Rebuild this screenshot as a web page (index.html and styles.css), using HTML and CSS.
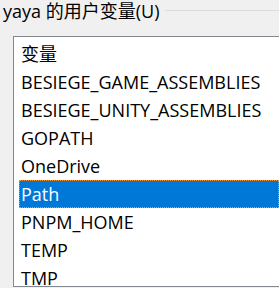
FILE: index.html
```html
<!DOCTYPE html>
<html lang="zh-CN">
<head>
  <meta charset="UTF-8" />
  <title>用户变量</title>
  <link rel="stylesheet" href="styles.css">
</head>
<body>
  <div class="group">
    <div class="group-head">
      <span class="group-title">yaya 的用户变量(U)</span>
      <span class="group-line"></span>
    </div>
    <ul class="listbox">
      <li class="item">变量</li>
      <li class="item">BESIEGE_GAME_ASSEMBLIES</li>
      <li class="item">BESIEGE_UNITY_ASSEMBLIES</li>
      <li class="item">GOPATH</li>
      <li class="item">OneDrive</li>
      <li class="item selected">Path</li>
      <li class="item">PNPM_HOME</li>
      <li class="item">TEMP</li>
      <li class="item">TMP</li>
    </ul>
  </div>
</body>
</html>
```

FILE: styles.css
```css
* {
  box-sizing: border-box;
}
html, body {
  margin: 0;
  padding: 0;
  height: 100%;
  overflow: hidden;
  background: #f0f0f0;
  color: #000;
  font-family: "Open Sans", "Noto Sans CJK SC", sans-serif;
  font-size: 18px;
}
.group-head {
  display: flex;
  align-items: center;
  height: 22px;
  padding-left: 3px;
}
.group-title {
  line-height: 22px;
  white-space: nowrap;
}
.group-line {
  flex: 1;
  margin: 0 0 2px 6px;
  border-top: 1px solid #dcdcdc;
}
.listbox {
  list-style: none;
  margin: 14px 0 0 13px;
  padding: 3px 0 0 5px;
  width: calc(100% - 13px);
  height: 251px;
  overflow: hidden;
  background: #fff;
  border: 1px solid #828790;
  border-right: 0;
}
.item {
  height: 28px;
  line-height: 28px;
  padding-left: 2px;
  white-space: nowrap;
}
.selected {
  background: #0078d7;
  color: #fff;
  outline: 1px dotted #f0953a;
  outline-offset: -1px;
}
```
